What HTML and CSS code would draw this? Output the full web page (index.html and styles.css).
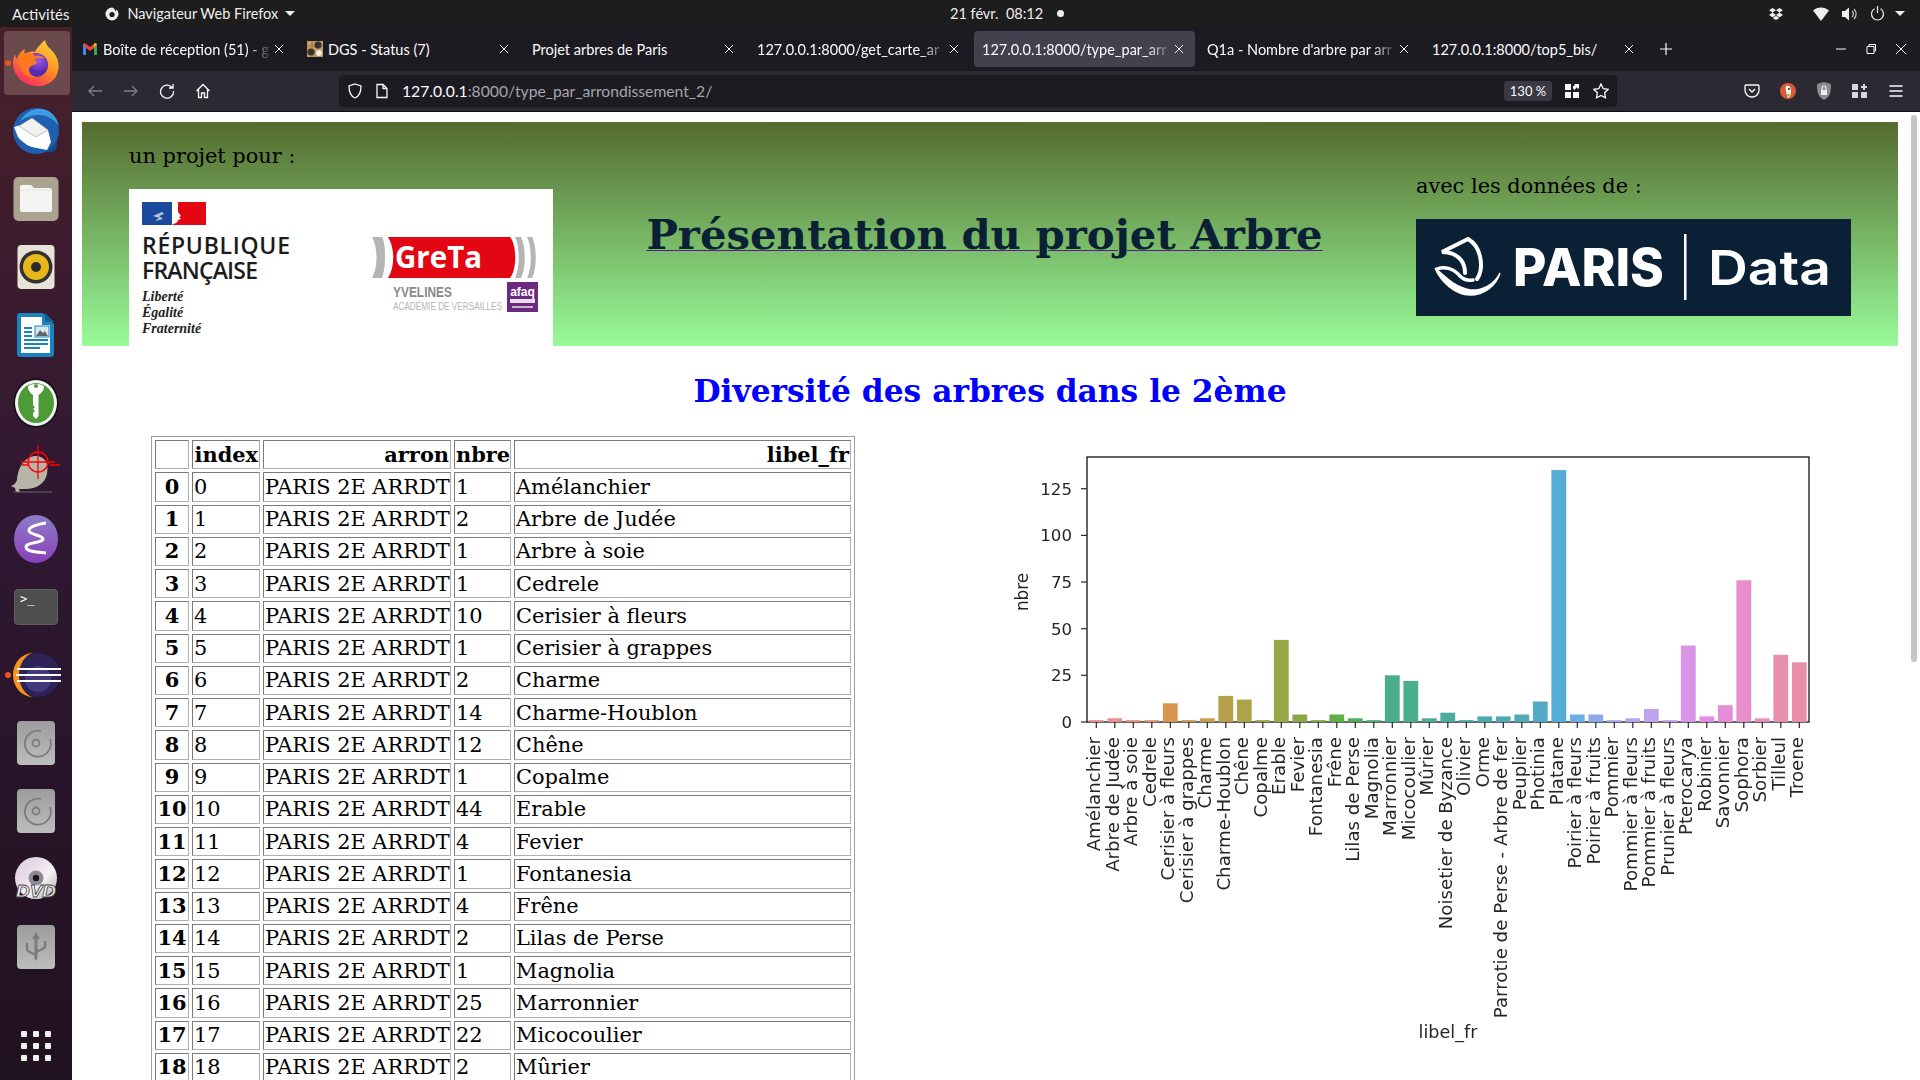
FILE: index.html
```html
<!DOCTYPE html>
<html lang="fr">
<head>
  <meta charset="UTF-8">
  <meta name="viewport" content="width=device-width, initial-scale=1.0">
  <title>Présentation du projet Arbre</title>
  <link rel="stylesheet" href="styles.css">
</head>
<body>
  <div class="topbar">
    <span class="activities">Activités</span>
    <span class="app-menu">
      <svg width="16" height="16" viewBox="0 0 16 16"><path d="M8 1.5a6.5 6.5 0 1 0 6.5 6.5c0-2-1-3.700-2.300-4.800.3 1-.1 1.800-.7 2.200C11 3.400 9.800 1.800 8 1.500z" fill="#eee"/><circle cx="8" cy="8.500" r="2.600" fill="#1d1d1d"/></svg>
      Navigateur Web Firefox
      <i class="caret"></i>
    </span>
    <span class="clock">21 févr.&nbsp; 08:12<i class="clock-dot"></i></span>
    <span class="tray">
      <svg class="tray-dropbox" width="14" height="14" viewBox="0 0 14 14" fill="#eee"><path d="M3.500 1 7 3.300 3.500 5.600 0 3.300zM10.500 1 14 3.300l-3.500 2.300L7 3.300zM3.500 5.600 7 7.900l-3.500 2.300L0 7.900zM10.500 5.600 14 7.900l-3.500 2.300L7 7.900zM7 8.700l3.400 2.200L7 13l-3.400-2.100z"/></svg>
      <svg class="tray-wifi" width="16" height="14" viewBox="0 0 16 14" fill="#eee"><path d="M0 3.500C4.500-.5 11.500-.5 16 3.500L8 14z"/></svg>
      <svg class="tray-sound" width="16" height="14" viewBox="0 0 16 14"><path d="M0 4h3l4-3.500v13L3 10H0z" fill="#eee"/><path d="M10 4a4 4 0 0 1 0 6M12 2a7 7 0 0 1 0 10" fill="none" stroke="#ccc" stroke-width="1.200"/></svg>
      <svg class="tray-power" width="15" height="15" viewBox="0 0 15 15" fill="none" stroke="#eee" stroke-width="1.200"><path d="M4.500 2.800a6 6 0 1 0 6 0M7.500 0v7"/></svg>
      <i class="caret"></i>
    </span>
  </div>

  <div class="desktop">
    <nav class="dock">
      <div class="dock-slot is-active is-focused">
        <svg width="50" height="50" viewBox="0 0 50 50">
          <defs>
            <linearGradient id="foxBody" x1="0.800" y1="0" x2="0.200" y2="1"><stop offset="0" stop-color="#ffd43a"/><stop offset="0.500" stop-color="#ff8a22"/><stop offset="1" stop-color="#f5206a"/></linearGradient>
            <radialGradient id="foxGlobe" cx="0.600" cy="0.300"><stop offset="0" stop-color="#9a5cf0"/><stop offset="1" stop-color="#5b2ab0"/></radialGradient>
          </defs>
          <path d="M34 2c1 6 5 8 9 13 6 8 6 18 1 25-5 6-12 9-20 8C12 47 3 38 2 27c-.2-4 .5-8 2-11 .3 3 1 4 2 5 1-4 4-8 8-10-1 3-1 4 0 5 3-2 7-3 10-2 2-5 6-8 10-12z" fill="url(#foxBody)"/>
          <circle cx="25" cy="27" r="12" fill="url(#foxGlobe)"/>
          <path d="M9 16c5-2 11-2 16 2 3-1 7 0 9 3-5-2-9-1-11 1 2 1 3 2 3 3-3 3-8 2-8 7 0 3 3 7 8 7-7 2-14-2-16-9C9 25 8 20 9 16z" fill="#ff7a1f"/>
        </svg>
      </div>
      <div class="dock-slot">
        <svg width="50" height="50" viewBox="0 0 50 50">
          <circle cx="25" cy="25" r="23" fill="#1f5fb0"/>
          <path d="M9 16C13 7 22 2 31 3c9 1 15 8 17 17-5-7-12-11-20-11-7 0-14 2-19 7z" fill="#3d9be4"/>
          <path d="M34 46c6-3 11-9 13-16l-2 14c-3 2-7 3-11 2z" fill="#144a8e"/>
          <path d="M3 21 7 31c5 6 11 10 19 11l10 2 4-8-3-12-17-8z" fill="#fff"/>
          <path d="M8 20 21 12l16 12-12 7z" fill="#f1f1f1" stroke="#aaa" stroke-width="0.700"/>
        </svg>
      </div>
      <div class="dock-slot">
        <svg width="46" height="46" viewBox="0 0 46 46">
          <rect x="0.500" y="1" width="45" height="44" rx="5" fill="#a9a390"/>
          <path d="M7 11c0-1 1-2 2-2h9l3 3h16c1 0 2 1 2 2v20c0 1-1 2-2 2H9c-1 0-2-1-2-2z" fill="#f6f5f4"/>
          <path d="M7 14h32" stroke="#dedbd6" stroke-width="0.800"/>
        </svg>
      </div>
      <div class="dock-slot">
        <svg width="38" height="46" viewBox="0 0 38 46">
          <rect x="0.500" y="1" width="37" height="44" rx="4" fill="#e7e3d8"/>
          <circle cx="19" cy="23" r="16.500" fill="#33312e"/>
          <circle cx="19" cy="23" r="13" fill="#e7b71c"/>
          <circle cx="19" cy="23" r="5" fill="#2b2a28"/>
        </svg>
      </div>
      <div class="dock-slot">
        <svg width="38" height="46" viewBox="0 0 38 46">
          <path d="M3 1h23l11 11v30a3 3 0 0 1-3 3H3a3 3 0 0 1-3-3V4a3 3 0 0 1 3-3z" fill="#1a83bf"/>
          <path d="M4 5h21v8h8v28H4z" fill="#fff"/>
          <path d="M28 1l9 9h-9z" fill="#14638f"/>
          <path d="M7 16h8M7 20h8M7 24h8M7 28h24M7 32h24M7 36h16" stroke="#1a83bf" stroke-width="2"/>
          <rect x="18" y="14" width="14" height="11" fill="#d5e9f3" stroke="#1a83bf"/>
          <path d="M19 24l4-6 3 3 2-2 3 5z" fill="#666"/>
        </svg>
      </div>
      <div class="dock-slot">
        <svg width="46" height="50" viewBox="0 0 46 50">
          <ellipse cx="23" cy="25" rx="22.500" ry="24.500" fill="#111"/>
          <ellipse cx="23" cy="25" rx="21" ry="23" fill="#f4f4f4"/>
          <ellipse cx="23" cy="25" rx="18" ry="20" fill="#4d9a38"/>
          <path d="M15 9c0-4 16-4 16 0 0 4-4 7-5.500 8v21l-2.500 3-3-3v-3l2-2-2-2 2-2-2-2V17c-1.500-1-5-4-5-8zM21 8a2 2 0 1 0 4 0 2 2 0 1 0-4 0z" fill="#fff"/>
        </svg>
      </div>
      <div class="dock-slot">
        <svg width="52" height="52" viewBox="0 0 52 52">
          <path d="M1 41c3-1 5-3 6-6 1-14 9-24 19-24 9 0 13 8 11 18-2 9-10 15-22 15H9l1 3H6l-1-4z" fill="#b5b5a8"/>
          <path d="M4 47h38" stroke="#666" stroke-width="1"/>
          <g fill="none" stroke="#f00" stroke-width="1.500"><circle cx="28" cy="17" r="10"/><path d="M28 0v34M12 20h6M40 20h10M11 17h34" stroke-width="1.300"/></g>
        </svg>
      </div>
      <div class="dock-slot">
        <svg width="46" height="50" viewBox="0 0 46 50">
          <defs><linearGradient id="emacsBg" x1="0" y1="0" x2="0" y2="1"><stop offset="0" stop-color="#8c7ec8"/><stop offset="1" stop-color="#8a3fb8"/></linearGradient></defs>
          <ellipse cx="23" cy="25" rx="22" ry="24" fill="url(#emacsBg)"/>
          <path d="M33 9c-8 1-18 4-17 8s14 4 14 8-17 3-17 8 11 5 20 6" fill="none" stroke="#fff" stroke-width="3"/>
        </svg>
      </div>
      <div class="dock-slot">
        <span class="terminal-icon">&gt;_</span>
      </div>
      <div class="dock-slot is-active">
        <svg width="50" height="46" viewBox="0 0 50 46">
          <circle cx="27" cy="23" r="22" fill="#2c2255"/>
          <circle cx="27" cy="27" r="13" fill="#423a7d"/>
          <path d="M22 .5C10 2 2 11 2 23s8 21 20 22.500C13 42 8 33 8 23S13 4 22 .5z" fill="#f7941e"/>
          <path d="M6 17h44M5 23h45M6 29h44" stroke="#fff" stroke-width="2"/>
        </svg>
      </div>
      <div class="dock-slot">
        <svg class="disk-icon" width="38" height="44" viewBox="0 0 38 44">
          <rect width="38" height="44" rx="4" fill="url(#diskBg)"/>
          <defs><linearGradient id="diskBg" x1="0" y1="0" x2="0" y2="1"><stop offset="0" stop-color="#9c9c9c"/><stop offset="1" stop-color="#bdbdbd"/></linearGradient></defs>
          <path d="M24 10a13 13 0 1 0 9 8" fill="none" stroke="#7c7c7c" stroke-width="1.800"/>
          <circle cx="19" cy="22" r="3.500" fill="none" stroke="#7c7c7c" stroke-width="1.800"/>
        </svg>
      </div>
      <div class="dock-slot">
        <svg class="disk-icon" width="38" height="44" viewBox="0 0 38 44">
          <rect width="38" height="44" rx="4" fill="url(#diskBg)"/>
          <path d="M24 10a13 13 0 1 0 9 8" fill="none" stroke="#7c7c7c" stroke-width="1.800"/>
          <circle cx="19" cy="22" r="3.500" fill="none" stroke="#7c7c7c" stroke-width="1.800"/>
        </svg>
      </div>
      <div class="dock-slot">
        <svg width="44" height="44" viewBox="0 0 44 44">
          <defs><linearGradient id="dvdBg" x1="0" y1="0" x2="1" y2="1"><stop offset="0" stop-color="#d8d8d8"/><stop offset="0.300" stop-color="#e8d8e8"/><stop offset="0.600" stop-color="#f3f3f3"/><stop offset="1" stop-color="#aaa"/></linearGradient></defs>
          <circle cx="22" cy="21" r="21" fill="url(#dvdBg)"/>
          <circle cx="22" cy="21" r="7.500" fill="#8e8a90"/>
          <circle cx="22" cy="21" r="3.200" fill="#1d1220"/>
          <text class="dvd-text" x="2" y="40" textLength="40" lengthAdjust="spacingAndGlyphs">DVD</text>
        </svg>
      </div>
      <div class="dock-slot">
        <svg class="disk-icon" width="38" height="44" viewBox="0 0 38 44">
          <rect width="38" height="44" rx="4" fill="url(#diskBg)"/>
          <path d="M19 7l4 7h-2.500v19l-1.500 3-1.500-3V14H15z" fill="#7c7c7c"/>
          <path d="M10 18v6c0 3 3 3 9 6M28 16v5c0 3-3 3-9 6" fill="none" stroke="#7c7c7c" stroke-width="2.400"/>
        </svg>
      </div>
      <div class="apps-grid">
        <i></i><i></i><i></i><i></i><i></i><i></i><i></i><i></i><i></i>
      </div>
    </nav>

    <div class="browser">
      <div class="tabbar">
        <div class="tab">
          <svg class="favicon" width="16" height="16" viewBox="0 0 16 16"><path d="M1 3v11h3V7l4 3 4-3v7h3V3l-2-1-5 4-5-4z" fill="#ea4335"/><path d="M1 3v11h3V7z" fill="#4285f4"/><path d="M12 7v7h3V3z" fill="#34a853"/><path d="M15 3l-2-1-1 1v4z" fill="#fbbc04"/></svg>
          <span class="tab-title is-long">Boîte de réception (51) - g</span>
          <svg class="tab-close" width="12" height="12" viewBox="0 0 12 12"><path d="M2 2l8 8M10 2l-8 8"/></svg>
        </div>
        <div class="tab">
          <svg class="favicon" width="16" height="16" viewBox="0 0 16 16"><rect width="16" height="16" fill="#c89a5c"/><path d="M0 5h16M0 11h16M5 0v16M11 0v16" stroke="#8a6a3a" stroke-width="0.600"/><circle cx="11" cy="4" r="3.500" fill="#333"/><circle cx="4" cy="11" r="3.500" fill="#333"/><circle cx="12" cy="12" r="3" fill="#eee"/></svg>
          <span class="tab-title">DGS - Status (7)</span>
          <svg class="tab-close" width="12" height="12" viewBox="0 0 12 12"><path d="M2 2l8 8M10 2l-8 8"/></svg>
        </div>
        <div class="tab">
          <span class="tab-title">Projet arbres de Paris</span>
          <svg class="tab-close" width="12" height="12" viewBox="0 0 12 12"><path d="M2 2l8 8M10 2l-8 8"/></svg>
        </div>
        <div class="tab">
          <span class="tab-title is-long">127.0.0.1:8000/get_carte_ar</span>
          <svg class="tab-close" width="12" height="12" viewBox="0 0 12 12"><path d="M2 2l8 8M10 2l-8 8"/></svg>
        </div>
        <div class="tab is-selected">
          <span class="tab-title is-long">127.0.0.1:8000/type_par_arr</span>
          <svg class="tab-close" width="12" height="12" viewBox="0 0 12 12"><path d="M2 2l8 8M10 2l-8 8"/></svg>
        </div>
        <div class="tab">
          <span class="tab-title is-long">Q1a - Nombre d'arbre par arr</span>
          <svg class="tab-close" width="12" height="12" viewBox="0 0 12 12"><path d="M2 2l8 8M10 2l-8 8"/></svg>
        </div>
        <div class="tab">
          <span class="tab-title">127.0.0.1:8000/top5_bis/</span>
          <svg class="tab-close" width="12" height="12" viewBox="0 0 12 12"><path d="M2 2l8 8M10 2l-8 8"/></svg>
        </div>
        <svg class="new-tab" width="14" height="14" viewBox="0 0 14 14"><path d="M7 1v12M1 7h12"/></svg>
        <div class="window-buttons">
          <svg width="12" height="12" viewBox="0 0 12 12"><path d="M1 6h10"/></svg>
          <svg width="12" height="12" viewBox="0 0 12 12"><path d="M2 3.500h7v7H2zM4 3.500V1.500h6.500V8H9"/></svg>
          <svg width="12" height="12" viewBox="0 0 12 12"><path d="M1 1l10 10M11 1L1 11"/></svg>
        </div>
      </div>

      <div class="toolbar">
        <svg class="nav-icon is-disabled" width="16" height="16" viewBox="0 0 16 16"><path d="M15 8H2M7 3 2 8l5 5"/></svg>
        <svg class="nav-icon is-disabled" width="16" height="16" viewBox="0 0 16 16"><path d="M1 8h13M9 3l5 5-5 5"/></svg>
        <svg class="nav-icon" width="16" height="16" viewBox="0 0 16 16"><path d="M13 4.500A6.500 6.500 0 1 0 14.500 8M14 1v4h-4"/></svg>
        <svg class="nav-icon" width="16" height="16" viewBox="0 0 16 16"><path d="M1.500 8 8 1.500 14.500 8M3.500 6.500V14.500H6.500V10H9.500V14.500H12.500V6.500"/></svg>
        <div class="urlbar">
          <svg class="nav-icon url-icon" width="16" height="16" viewBox="0 0 16 16"><path d="M8 1 14 3c0 6-1 10-6 12C3 13 2 9 2 3z"/></svg>
          <svg class="nav-icon url-icon" width="14" height="16" viewBox="0 0 14 16"><path d="M2 1.500h6l4 4v9H2zM8 1.500v4h4"/></svg>
          <span class="url"><b>127.0.0.1</b>:8000/type_par_arrondissement_2/</span>
          <span class="zoom-badge">130 %</span>
          <svg class="url-grid" width="14" height="16" viewBox="0 0 14 16" fill="#fbfbfe"><path d="M0 1h6v6H0zM0 9h6v6H0zM8 9h6v6H8zM8 3h1.500V1H14v4.500h-2V4L9.500 7 8 5.500z"/></svg>
          <svg class="nav-icon" width="16" height="16" viewBox="0 0 16 16"><path d="M8 1l2.200 4.600 5 .7-3.600 3.500.9 5L8 12.400 3.500 14.800l.9-5L.8 6.300l5-.7z"/></svg>
        </div>
        <div class="toolbar-right">
          <svg class="nav-icon" width="16" height="16" viewBox="0 0 16 16"><path d="M2 2h12a1 1 0 0 1 1 1v4a7 7 0 0 1-14 0V3a1 1 0 0 1 1-1zM5 6l3 3 3-3"/></svg>
          <svg width="16" height="16" viewBox="0 0 16 16"><circle cx="8" cy="8" r="8" fill="#de5833"/><path d="M6 3c3-1 5 1 5 5s-1 6-3 7c-1-3-3-8-2-12z" fill="#fff"/><circle cx="9" cy="6" r="1" fill="#222"/><path d="M7 9h4l-2 1z" fill="#fdc82f"/><path d="M7 12h3" stroke="#67bd47" stroke-width="1.500"/></svg>
          <svg width="16" height="18" viewBox="0 0 16 18"><path d="M8 0l7 2c0 8-1 13-7 16C2 15 1 10 1 2z" fill="#8a8a8f"/><rect x="5" y="8" width="6" height="5" fill="#eee"/><path d="M6 8V6a2 2 0 0 1 4 0v2" fill="none" stroke="#eee" stroke-width="1.200"/></svg>
          <svg width="16" height="16" viewBox="0 0 16 16" fill="#d8d8dc"><path d="M0 1h6v6H0zM0 9h6v6H0zM9 9h6v6H9zM11 1h2v2h2v2h-2v2h-2V5H9V3h2z"/></svg>
          <svg class="nav-icon" width="16" height="16" viewBox="0 0 16 16"><path d="M1.500 3h13M1.500 8h13M1.500 13h13"/></svg>
        </div>
      </div>

      <main class="page">
        <header class="banner">
          <div class="banner-left">
            <p class="banner-label">un projet pour :</p>
            <svg class="logo-partners" width="424" height="157" viewBox="0 0 424 157">
              <rect width="424" height="157" fill="#fff"/>
              <rect x="13" y="13" width="30" height="23" fill="#1b4a9c"/>
              <path d="M49 13h28v23H43c3-2 6-2 6-5l3-1-2-2 2-1-3-4c0-4 0-7 0-10z" fill="#e30613"/>
              <path d="M24 27l9-4 2 2-5 2 4 3-8 2 4-3z" fill="#b7c6e0"/>
              <text class="rf-name" x="13" y="64.500" textLength="148">RÉPUBLIQUE</text>
              <text class="rf-name" x="13" y="90" textLength="116">FRANÇAISE</text>
              <text class="rf-motto" x="13" y="111.500">Liberté</text>
              <text class="rf-motto" x="13" y="128">Égalité</text>
              <text class="rf-motto" x="13" y="144">Fraternité</text>
              <path d="M243 48h10c4 6 4 31 0 41h-10c6-11 6-30 0-41z" fill="#b5b5b5"/>
              <path d="M259 48h122c7 8 7 33 0 41H259c7-11 7-30 0-41z" fill="#e30613"/>
              <path d="M386 48h6c5 9 5 32 0 41h-6c5-10 5-31 0-41zM398 48h5c5 9 5 32 0 41h-5c5-10 5-31 0-41z" fill="#b5b5b5"/>
              <text class="greta-name" x="266" y="79" textLength="87" lengthAdjust="spacingAndGlyphs">GreTa</text>
              <text class="greta-city" x="264" y="108" textLength="59" lengthAdjust="spacingAndGlyphs">YVELINES</text>
              <text class="greta-academy" x="264" y="121" textLength="109" lengthAdjust="spacingAndGlyphs">ACADÉMIE DE VERSAILLES</text>
              <rect x="378" y="93" width="31" height="30" fill="#6b2a80"/>
              <text class="afaq-name" x="393.500" y="107" text-anchor="middle">afaq</text>
              <rect x="381" y="110" width="25" height="4" fill="#e8dcef"/>
              <rect x="383" y="117" width="21" height="2" fill="#c9b4d4"/>
            </svg>
          </div>
          <h1 class="banner-title"><a href="#"><span>Présentation du projet Arbre</span></a></h1>
          <div class="banner-right">
            <p class="banner-label">avec les données de :</p>
            <svg class="logo-paris" width="435" height="97" viewBox="0 0 435 97">
              <rect width="435" height="97" fill="#0a2035"/>
              <g fill="none" stroke="#fff" stroke-linecap="round">
                <path d="M19 49c6 14 20 27 35 27 14 0 26-9 30-22-6 12-18 18-30 17-14-2-23-12-35-22z" fill="#fff" stroke-width="1.500"/>
                <path d="M52 20C66 28 68 50 61 60" stroke-width="4"/>
                <path d="M52 20 26 33c8 0 15 3 19 8 3 4 4 9 4 13" stroke-width="4"/>
                <path d="M21 50c7-3 16-1 23 7 3 3 8 5 13 4" stroke-width="3.500"/>
              </g>
              <text class="paris-name" x="97" y="67" textLength="151" lengthAdjust="spacingAndGlyphs">PARIS</text>
              <rect x="268" y="15" width="2.500" height="66" fill="#fff"/>
              <text class="paris-data" x="292" y="66" textLength="123" lengthAdjust="spacingAndGlyphs">Data</text>
            </svg>
          </div>
        </header>

        <h2 class="section-title">Diversité des arbres dans le 2ème</h2>

        <section class="results">
          <table class="dataframe">
            <colgroup><col class="col-row"><col class="col-index"><col class="col-arron"><col class="col-nbre"><col></colgroup>
            <thead>
              <tr><th></th><th>index</th><th>arron</th><th>nbre</th><th>libel_fr</th></tr>
            </thead>
            <tbody>
              <tr><th>0</th><td>0</td><td>PARIS 2E ARRDT</td><td>1</td><td>Amélanchier</td></tr>
              <tr><th>1</th><td>1</td><td>PARIS 2E ARRDT</td><td>2</td><td>Arbre de Judée</td></tr>
              <tr><th>2</th><td>2</td><td>PARIS 2E ARRDT</td><td>1</td><td>Arbre à soie</td></tr>
              <tr><th>3</th><td>3</td><td>PARIS 2E ARRDT</td><td>1</td><td>Cedrele</td></tr>
              <tr><th>4</th><td>4</td><td>PARIS 2E ARRDT</td><td>10</td><td>Cerisier à fleurs</td></tr>
              <tr><th>5</th><td>5</td><td>PARIS 2E ARRDT</td><td>1</td><td>Cerisier à grappes</td></tr>
              <tr><th>6</th><td>6</td><td>PARIS 2E ARRDT</td><td>2</td><td>Charme</td></tr>
              <tr><th>7</th><td>7</td><td>PARIS 2E ARRDT</td><td>14</td><td>Charme-Houblon</td></tr>
              <tr><th>8</th><td>8</td><td>PARIS 2E ARRDT</td><td>12</td><td>Chêne</td></tr>
              <tr><th>9</th><td>9</td><td>PARIS 2E ARRDT</td><td>1</td><td>Copalme</td></tr>
              <tr><th>10</th><td>10</td><td>PARIS 2E ARRDT</td><td>44</td><td>Erable</td></tr>
              <tr><th>11</th><td>11</td><td>PARIS 2E ARRDT</td><td>4</td><td>Fevier</td></tr>
              <tr><th>12</th><td>12</td><td>PARIS 2E ARRDT</td><td>1</td><td>Fontanesia</td></tr>
              <tr><th>13</th><td>13</td><td>PARIS 2E ARRDT</td><td>4</td><td>Frêne</td></tr>
              <tr><th>14</th><td>14</td><td>PARIS 2E ARRDT</td><td>2</td><td>Lilas de Perse</td></tr>
              <tr><th>15</th><td>15</td><td>PARIS 2E ARRDT</td><td>1</td><td>Magnolia</td></tr>
              <tr><th>16</th><td>16</td><td>PARIS 2E ARRDT</td><td>25</td><td>Marronnier</td></tr>
              <tr><th>17</th><td>17</td><td>PARIS 2E ARRDT</td><td>22</td><td>Micocoulier</td></tr>
              <tr><th>18</th><td>18</td><td>PARIS 2E ARRDT</td><td>2</td><td>Mûrier</td></tr>
            </tbody>
          </table>

          <svg class="chart" width="820" height="620" viewBox="1000 440 820 620">
            <rect x="1087" y="457" width="722" height="265" fill="none" stroke="#111" stroke-width="1.300"/>
            <g class="ytick"><line x1="1081" x2="1087" y1="722" y2="722"/><text x="1072" y="728">0</text></g>
            <g class="ytick"><line x1="1081" x2="1087" y1="675.300" y2="675.300"/><text x="1072" y="681.300">25</text></g>
            <g class="ytick"><line x1="1081" x2="1087" y1="628.700" y2="628.700"/><text x="1072" y="634.700">50</text></g>
            <g class="ytick"><line x1="1081" x2="1087" y1="582" y2="582"/><text x="1072" y="588">75</text></g>
            <g class="ytick"><line x1="1081" x2="1087" y1="535.400" y2="535.400"/><text x="1072" y="541.400">100</text></g>
            <g class="ytick"><line x1="1081" x2="1087" y1="488.700" y2="488.700"/><text x="1072" y="494.700">125</text></g>
            <text class="axis-label axis-label-y" transform="rotate(-90 1028 592)" x="1028" y="592" text-anchor="middle">nbre</text>
            <text class="axis-label" x="1448" y="1038" text-anchor="middle">libel_fr</text>

            <g class="bar" transform="translate(1096.300 0)"><rect x="-7.400" y="720.100" width="14.800" height="1.900" fill="#e68f96"/><line y1="722" y2="728"/><text transform="translate(4 737) rotate(-90)">Amélanchier</text></g>
            <g class="bar" transform="translate(1114.800 0)"><rect x="-7.400" y="718.300" width="14.800" height="3.700" fill="#e8908e"/><line y1="722" y2="728"/><text transform="translate(4 737) rotate(-90)">Arbre de Judée</text></g>
            <g class="bar" transform="translate(1133.300 0)"><rect x="-7.400" y="720.100" width="14.800" height="1.900" fill="#e59382"/><line y1="722" y2="728"/><text transform="translate(4 737) rotate(-90)">Arbre à soie</text></g>
            <g class="bar" transform="translate(1151.800 0)"><rect x="-7.400" y="720.100" width="14.800" height="1.900" fill="#e3957a"/><line y1="722" y2="728"/><text transform="translate(4 737) rotate(-90)">Cedrele</text></g>
            <g class="bar" transform="translate(1170.300 0)"><rect x="-7.400" y="703.300" width="14.800" height="18.700" fill="#d89650"/><line y1="722" y2="728"/><text transform="translate(4 737) rotate(-90)">Cerisier à fleurs</text></g>
            <g class="bar" transform="translate(1188.800 0)"><rect x="-7.400" y="720.100" width="14.800" height="1.900" fill="#d09a50"/><line y1="722" y2="728"/><text transform="translate(4 737) rotate(-90)">Cerisier à grappes</text></g>
            <g class="bar" transform="translate(1207.300 0)"><rect x="-7.400" y="718.300" width="14.800" height="3.700" fill="#c69d4c"/><line y1="722" y2="728"/><text transform="translate(4 737) rotate(-90)">Charme</text></g>
            <g class="bar" transform="translate(1225.800 0)"><rect x="-7.400" y="695.900" width="14.800" height="26.100" fill="#b59f4a"/><line y1="722" y2="728"/><text transform="translate(4 737) rotate(-90)">Charme-Houblon</text></g>
            <g class="bar" transform="translate(1244.300 0)"><rect x="-7.400" y="699.600" width="14.800" height="22.400" fill="#ada348"/><line y1="722" y2="728"/><text transform="translate(4 737) rotate(-90)">Chêne</text></g>
            <g class="bar" transform="translate(1262.800 0)"><rect x="-7.400" y="720.100" width="14.800" height="1.900" fill="#a2a546"/><line y1="722" y2="728"/><text transform="translate(4 737) rotate(-90)">Copalme</text></g>
            <g class="bar" transform="translate(1281.300 0)"><rect x="-7.400" y="639.900" width="14.800" height="82.100" fill="#97a646"/><line y1="722" y2="728"/><text transform="translate(4 737) rotate(-90)">Erable</text></g>
            <g class="bar" transform="translate(1299.800 0)"><rect x="-7.400" y="714.500" width="14.800" height="7.500" fill="#8ca846"/><line y1="722" y2="728"/><text transform="translate(4 737) rotate(-90)">Fevier</text></g>
            <g class="bar" transform="translate(1318.300 0)"><rect x="-7.400" y="720.100" width="14.800" height="1.900" fill="#7fab47"/><line y1="722" y2="728"/><text transform="translate(4 737) rotate(-90)">Fontanesia</text></g>
            <g class="bar" transform="translate(1336.800 0)"><rect x="-7.400" y="714.500" width="14.800" height="7.500" fill="#62ae4a"/><line y1="722" y2="728"/><text transform="translate(4 737) rotate(-90)">Frêne</text></g>
            <g class="bar" transform="translate(1355.300 0)"><rect x="-7.400" y="718.300" width="14.800" height="3.700" fill="#4fae58"/><line y1="722" y2="728"/><text transform="translate(4 737) rotate(-90)">Lilas de Perse</text></g>
            <g class="bar" transform="translate(1373.800 0)"><rect x="-7.400" y="720.100" width="14.800" height="1.900" fill="#4cae72"/><line y1="722" y2="728"/><text transform="translate(4 737) rotate(-90)">Magnolia</text></g>
            <g class="bar" transform="translate(1392.300 0)"><rect x="-7.400" y="675.300" width="14.800" height="46.700" fill="#4bae8a"/><line y1="722" y2="728"/><text transform="translate(4 737) rotate(-90)">Marronnier</text></g>
            <g class="bar" transform="translate(1410.800 0)"><rect x="-7.400" y="680.900" width="14.800" height="41.100" fill="#4bae8f"/><line y1="722" y2="728"/><text transform="translate(4 737) rotate(-90)">Micocoulier</text></g>
            <g class="bar" transform="translate(1429.300 0)"><rect x="-7.400" y="718.300" width="14.800" height="3.700" fill="#4aad99"/><line y1="722" y2="728"/><text transform="translate(4 737) rotate(-90)">Mûrier</text></g>
            <g class="bar" transform="translate(1447.800 0)"><rect x="-7.400" y="712.700" width="14.800" height="9.300" fill="#4aada0"/><line y1="722" y2="728"/><text transform="translate(4 737) rotate(-90)">Noisetier de Byzance</text></g>
            <g class="bar" transform="translate(1466.300 0)"><rect x="-7.400" y="720.100" width="14.800" height="1.900" fill="#4aaca8"/><line y1="722" y2="728"/><text transform="translate(4 737) rotate(-90)">Olivier</text></g>
            <g class="bar" transform="translate(1484.800 0)"><rect x="-7.400" y="716.400" width="14.800" height="5.600" fill="#4babae"/><line y1="722" y2="728"/><text transform="translate(4 737) rotate(-90)">Orme</text></g>
            <g class="bar" transform="translate(1503.300 0)"><rect x="-7.400" y="716.400" width="14.800" height="5.600" fill="#4cabb4"/><line y1="722" y2="728"/><text transform="translate(4 737) rotate(-90)">Parrotie de Perse - Arbre de fer</text></g>
            <g class="bar" transform="translate(1521.800 0)"><rect x="-7.400" y="714.500" width="14.800" height="7.500" fill="#4faab9"/><line y1="722" y2="728"/><text transform="translate(4 737) rotate(-90)">Peuplier</text></g>
            <g class="bar" transform="translate(1540.300 0)"><rect x="-7.400" y="701.500" width="14.800" height="20.500" fill="#52aac5"/><line y1="722" y2="728"/><text transform="translate(4 737) rotate(-90)">Photinia</text></g>
            <g class="bar" transform="translate(1558.800 0)"><rect x="-7.400" y="470.100" width="14.800" height="251.900" fill="#55acd8"/><line y1="722" y2="728"/><text transform="translate(4 737) rotate(-90)">Platane</text></g>
            <g class="bar" transform="translate(1577.300 0)"><rect x="-7.400" y="714.500" width="14.800" height="7.500" fill="#6fade6"/><line y1="722" y2="728"/><text transform="translate(4 737) rotate(-90)">Poirier à fleurs</text></g>
            <g class="bar" transform="translate(1595.800 0)"><rect x="-7.400" y="714.500" width="14.800" height="7.500" fill="#8da9e8"/><line y1="722" y2="728"/><text transform="translate(4 737) rotate(-90)">Poirier à fruits</text></g>
            <g class="bar" transform="translate(1614.300 0)"><rect x="-7.400" y="720.100" width="14.800" height="1.900" fill="#a9a7ea"/><line y1="722" y2="728"/><text transform="translate(4 737) rotate(-90)">Pommier</text></g>
            <g class="bar" transform="translate(1632.800 0)"><rect x="-7.400" y="718.300" width="14.800" height="3.700" fill="#b5a5eb"/><line y1="722" y2="728"/><text transform="translate(4 737) rotate(-90)">Pommier à fleurs</text></g>
            <g class="bar" transform="translate(1651.300 0)"><rect x="-7.400" y="708.900" width="14.800" height="13.100" fill="#bfa4ea"/><line y1="722" y2="728"/><text transform="translate(4 737) rotate(-90)">Pommier à fruits</text></g>
            <g class="bar" transform="translate(1669.800 0)"><rect x="-7.400" y="720.100" width="14.800" height="1.900" fill="#cb9ce9"/><line y1="722" y2="728"/><text transform="translate(4 737) rotate(-90)">Prunier à fleurs</text></g>
            <g class="bar" transform="translate(1688.300 0)"><rect x="-7.400" y="645.500" width="14.800" height="76.500" fill="#d895e8"/><line y1="722" y2="728"/><text transform="translate(4 737) rotate(-90)">Pterocarya</text></g>
            <g class="bar" transform="translate(1706.800 0)"><rect x="-7.400" y="716.400" width="14.800" height="5.600" fill="#e48be8"/><line y1="722" y2="728"/><text transform="translate(4 737) rotate(-90)">Robinier</text></g>
            <g class="bar" transform="translate(1725.300 0)"><rect x="-7.400" y="705.200" width="14.800" height="16.800" fill="#e58dd8"/><line y1="722" y2="728"/><text transform="translate(4 737) rotate(-90)">Savonnier</text></g>
            <g class="bar" transform="translate(1743.800 0)"><rect x="-7.400" y="580.200" width="14.800" height="141.800" fill="#e78ecb"/><line y1="722" y2="728"/><text transform="translate(4 737) rotate(-90)">Sophora</text></g>
            <g class="bar" transform="translate(1762.300 0)"><rect x="-7.400" y="718.300" width="14.800" height="3.700" fill="#e88ebe"/><line y1="722" y2="728"/><text transform="translate(4 737) rotate(-90)">Sorbier</text></g>
            <g class="bar" transform="translate(1780.800 0)"><rect x="-7.400" y="654.800" width="14.800" height="67.200" fill="#e88eaf"/><line y1="722" y2="728"/><text transform="translate(4 737) rotate(-90)">Tilleul</text></g>
            <g class="bar" transform="translate(1799.300 0)"><rect x="-7.400" y="662.300" width="14.800" height="59.700" fill="#e890a8"/><line y1="722" y2="728"/><text transform="translate(4 737) rotate(-90)">Troene</text></g>
          </svg>
        </section>
        <div class="scroll-thumb"></div>
      </main>
    </div>
  </div>
</body>
</html>
```

FILE: styles.css
```css
* {
  box-sizing: border-box;
}
body {
  margin: 0;
  width: 1920px;
  height: 1080px;
  overflow: hidden;
  background: #fff;
  font-family: "Lato", "Noto Sans", sans-serif;
  display: flex;
  flex-direction: column;
}

/* gnome top bar */
.topbar {
  height: 27px;
  flex: none;
  background: #1d1d1d;
  color: #eee;
  font-size: 14.500px;
  display: flex;
  align-items: center;
  position: relative;
}
.activities {
  margin-left: 12px;
  font-size: 15px;
}
.app-menu {
  margin-left: 35px;
  display: flex;
  align-items: center;
  gap: 7px;
}
.caret {
  display: inline-block;
  width: 0;
  height: 0;
  border: 5px solid transparent;
  border-top: 5px solid #eee;
  border-bottom: 0;
}
.clock {
  position: absolute;
  left: 950px;
  display: flex;
  align-items: center;
  white-space: pre;
}
.clock-dot {
  width: 7px;
  height: 7px;
  margin-left: 14px;
  border-radius: 50%;
  background: #eee;
}
.tray {
  margin-left: auto;
  margin-right: 15px;
  display: flex;
  align-items: center;
}
.tray-wifi {
  margin-left: 30px;
}
.tray-sound {
  margin-left: 13px;
}
.tray-power {
  margin-left: 12px;
}
.tray .caret {
  margin-left: 10px;
}

.desktop {
  flex: 1;
  display: flex;
  min-height: 0;
}

/* ubuntu dock */
.dock {
  width: 72px;
  flex: none;
  padding-top: 2px;
  background: linear-gradient(#48202a, #301832 45%, #20111f);
  display: flex;
  flex-direction: column;
}
.dock-slot {
  height: 68px;
  flex: none;
  margin: 0 2px 0 4px;
  padding-right: 2px;
  display: flex;
  align-items: center;
  justify-content: center;
  position: relative;
}
.dock-slot.is-focused {
  height: 64px;
  margin-top: 2px;
  margin-bottom: 2px;
  background: #6b4a4e;
  border-radius: 4px;
}
.dock-slot.is-active::before {
  content: "";
  position: absolute;
  left: 1px;
  top: 50%;
  width: 6px;
  height: 6px;
  margin-top: -3px;
  border-radius: 50%;
  background: #e95420;
}
.terminal-icon {
  width: 44px;
  height: 36px;
  padding: 2px 0 0 5px;
  background: #4e4e4e;
  border: 1px solid #5f5f5f;
  border-radius: 4px;
  color: #fff;
  font-family: "DejaVu Sans Mono", monospace;
  font-size: 12px;
  line-height: 14px;
}
.dvd-text {
  font: italic 900 17px "Liberation Sans", sans-serif;
  fill: #fff;
  stroke: #444;
  stroke-width: 0.800;
}
.apps-grid {
  margin: auto auto 0;
  padding-bottom: 19px;
  display: grid;
  grid-template-columns: repeat(3, 6px);
  gap: 6px;
}
.apps-grid i {
  height: 6px;
  background: #eee;
  border-radius: 1px;
}

.browser {
  flex: 1;
  min-width: 0;
  display: flex;
  flex-direction: column;
}

/* firefox tabs */
.tabbar {
  height: 44px;
  flex: none;
  background: #1c1b22;
  color: #fbfbfe;
  font-size: 14.500px;
  display: flex;
  align-items: center;
}
.tab {
  width: 221px;
  height: 36px;
  flex: none;
  margin: 0 2px;
  padding: 0 10px 0 8px;
  border-radius: 4px;
  display: flex;
  align-items: center;
}
.tab.is-selected {
  background: #42414d;
}
.favicon {
  flex: none;
  margin-right: 5px;
}
.tab-title {
  flex: 1;
  min-width: 0;
  overflow: hidden;
  white-space: nowrap;
}
.tab-title.is-long {
  -webkit-mask-image: linear-gradient(to left, transparent 0, #000 26px);
  mask-image: linear-gradient(to left, transparent 0, #000 26px);
}
.tab-close {
  flex: none;
  fill: none;
  stroke: #fbfbfe;
  stroke-width: 1;
}
.new-tab {
  margin-left: 12px;
  fill: none;
  stroke: #fbfbfe;
  stroke-width: 1.200;
}
.window-buttons {
  margin-left: auto;
  margin-right: 13px;
  display: flex;
  gap: 18px;
}
.window-buttons svg {
  fill: none;
  stroke: #fbfbfe;
  stroke-width: 1;
}

/* firefox toolbar */
.toolbar {
  height: 41px;
  flex: none;
  padding-left: 15px;
  background: #2b2a33;
  border-bottom: 1px solid #0c0c0d;
  display: flex;
  align-items: center;
  gap: 20px;
}
.nav-icon {
  flex: none;
  fill: none;
  stroke: #fbfbfe;
  stroke-width: 1.300;
}
.nav-icon.is-disabled {
  opacity: 0.4;
}
.urlbar {
  width: 1278px;
  height: 32px;
  margin-left: 108px;
  padding-left: 8px;
  background: #1c1b22;
  border-radius: 4px;
  display: flex;
  align-items: center;
  flex: none;
}
.url-icon {
  margin-right: 12px;
}
.url {
  color: #a6a6ab;
  font-size: 15.700px;
  margin-left: 1px;
}
.url b {
  color: #fbfbfe;
  font-weight: 400;
}
.zoom-badge {
  width: 48px;
  height: 20px;
  margin-left: auto;
  background: #3a3944;
  border-radius: 3px;
  color: #fbfbfe;
  font-size: 13px;
  line-height: 20px;
  text-align: center;
}
.url-grid {
  margin: 0 14px 0 13px;
}
.urlbar .nav-icon:last-child {
  margin-right: 8px;
}
.toolbar-right {
  margin-left: 107px;
  display: flex;
  align-items: center;
  gap: 20px;
}

/* the page itself */
.page {
  flex: 1;
  min-height: 0;
  padding: 10px 22px 0 10px;
  background: #fff;
  overflow: hidden;
  position: relative;
  font-family: "DejaVu Serif", serif;
  font-size: 20.900px;
  color: #000;
}
.scroll-thumb {
  position: absolute;
  top: 3px;
  right: 3px;
  width: 6px;
  height: 547px;
  background: #c6c6c6;
  border-radius: 3px;
}
.banner {
  height: 224px;
  background: linear-gradient(#556b2f, #98fb98);
  padding: 0 47px;
  display: flex;
}
.banner-left {
  padding-top: 22px;
  flex: none;
}
.banner-right {
  padding-top: 52px;
  flex: none;
}
.banner-label {
  margin: 0 0 21px;
  line-height: 24px;
}
.logo-partners,
.logo-paris {
  display: block;
}
.banner-title {
  flex: 1;
  margin: 88px 0 0;
  font-size: 41.800px;
  text-align: center;
}
.banner-title a {
  color: #551a8b;
  text-decoration-thickness: 1px;
}
.banner-title span {
  color: #0a2035;
}
.rf-name {
  font: 600 23px "Open Sans", sans-serif;
  fill: #1c1c1c;
}
.rf-motto {
  font: italic bold 14px "Liberation Serif", serif;
  fill: #222;
}
.greta-name {
  font: 700 30px "Open Sans", sans-serif;
  fill: #fff;
}
.greta-city {
  font: 700 15px "Liberation Sans", sans-serif;
  fill: #8a8a8a;
}
.greta-academy {
  font: 400 11px "Liberation Sans", sans-serif;
  fill: #b5b5b5;
}
.afaq-name {
  font: 700 12px "Liberation Sans", sans-serif;
  fill: #fff;
}
.paris-name {
  font: 800 52px "Inter", sans-serif;
  fill: #fff;
}
.paris-data {
  font: 600 48px "Inter", sans-serif;
  fill: #fff;
}
.section-title {
  margin: 27px 0 27px;
  color: #00f;
  font-size: 31.300px;
  line-height: 36px;
  text-align: center;
}
.results {
  padding-left: 69px;
  display: flex;
  align-items: flex-start;
}

/* pandas to_html table */
.dataframe {
  width: 704px;
  flex: none;
  table-layout: fixed;
  border-collapse: separate;
  border-spacing: 3px;
  border: 1px solid #a0a0a0;
  font-size: 20.900px;
}
.col-row {
  width: 34px;
}
.col-index {
  width: 68px;
}
.col-arron {
  width: 188px;
}
.col-nbre {
  width: 57px;
}
.dataframe th,
.dataframe td {
  height: 29.250px;
  padding: 0 1px;
  border: 1px solid;
  border-color: #7a7a7a #b0b0b0 #b0b0b0 #7a7a7a;
  white-space: nowrap;
  line-height: 24px;
}
.dataframe thead th {
  text-align: right;
}

/* seaborn barplot */
.chart {
  margin: 4px 78px 0 auto;
  flex: none;
  filter: blur(0.400px);
  font-family: "DejaVu Sans", sans-serif;
  font-size: 16.600px;
  fill: #262626;
}
.chart line {
  stroke: #262626;
  stroke-width: 1.200;
}
.axis-label {
  font-size: 17.600px;
}
.axis-label-y {
  font-size: 16.800px;
}
.ytick text {
  text-anchor: end;
}
.bar text {
  text-anchor: end;
  font-size: 18.200px;
}
```
